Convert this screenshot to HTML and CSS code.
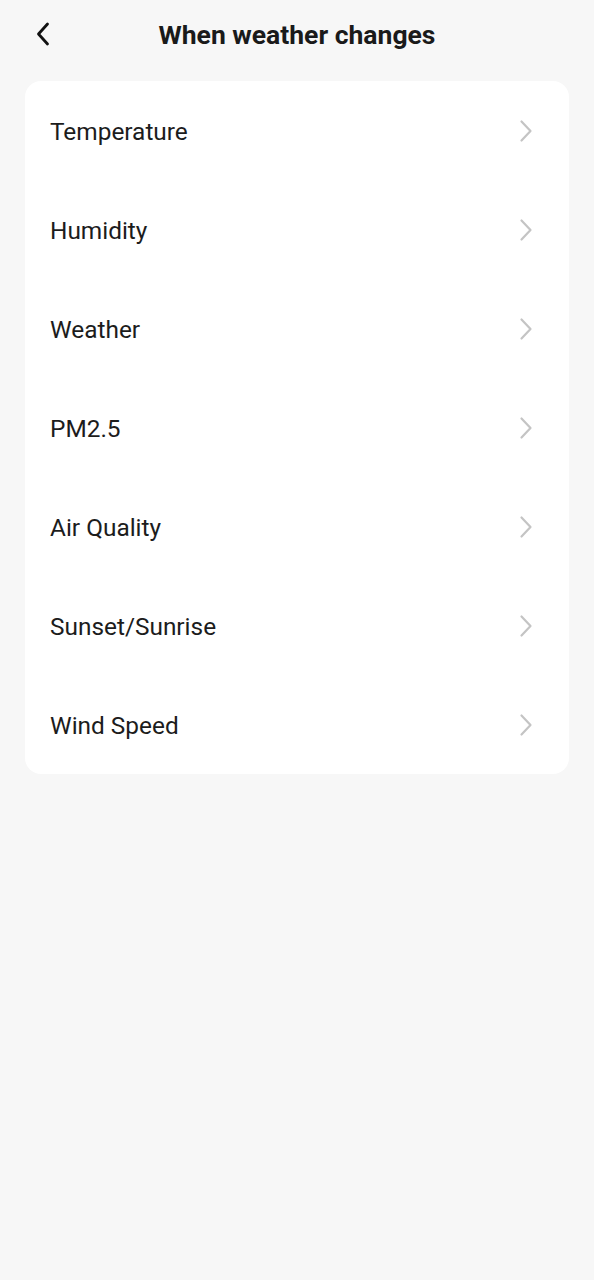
FILE: index.html
```html
<!DOCTYPE html>
<html>
<head>
<meta charset="utf-8">
<link rel="stylesheet" href="styles.css">
</head>
<body>
<header class="topbar">
  <button class="back" aria-label="Back">
    <svg width="18" height="26" viewBox="0 0 18 26"><path d="M13.5 3 L4.5 13 L13.5 23" fill="none" stroke="#111" stroke-width="2.8" stroke-linecap="round" stroke-linejoin="round"/></svg>
  </button>
  <h1 class="title">When weather changes</h1>
</header>
<main class="card">
  <div class="row"><span class="label">Temperature</span><svg class="chev" width="16" height="24" viewBox="0 0 16 24"><path d="M3.5 2.5 L12.5 12 L3.5 21.5" fill="none" stroke="#c4c4c4" stroke-width="2.2" stroke-linecap="round" stroke-linejoin="round"/></svg></div>
  <div class="row"><span class="label">Humidity</span><svg class="chev" width="16" height="24" viewBox="0 0 16 24"><path d="M3.5 2.5 L12.5 12 L3.5 21.5" fill="none" stroke="#c4c4c4" stroke-width="2.2" stroke-linecap="round" stroke-linejoin="round"/></svg></div>
  <div class="row"><span class="label">Weather</span><svg class="chev" width="16" height="24" viewBox="0 0 16 24"><path d="M3.5 2.5 L12.5 12 L3.5 21.5" fill="none" stroke="#c4c4c4" stroke-width="2.2" stroke-linecap="round" stroke-linejoin="round"/></svg></div>
  <div class="row"><span class="label">PM2.5</span><svg class="chev" width="16" height="24" viewBox="0 0 16 24"><path d="M3.5 2.5 L12.5 12 L3.5 21.5" fill="none" stroke="#c4c4c4" stroke-width="2.2" stroke-linecap="round" stroke-linejoin="round"/></svg></div>
  <div class="row"><span class="label">Air Quality</span><svg class="chev" width="16" height="24" viewBox="0 0 16 24"><path d="M3.5 2.5 L12.5 12 L3.5 21.5" fill="none" stroke="#c4c4c4" stroke-width="2.2" stroke-linecap="round" stroke-linejoin="round"/></svg></div>
  <div class="row"><span class="label">Sunset/Sunrise</span><svg class="chev" width="16" height="24" viewBox="0 0 16 24"><path d="M3.5 2.5 L12.5 12 L3.5 21.5" fill="none" stroke="#c4c4c4" stroke-width="2.2" stroke-linecap="round" stroke-linejoin="round"/></svg></div>
  <div class="row"><span class="label">Wind Speed</span><svg class="chev" width="16" height="24" viewBox="0 0 16 24"><path d="M3.5 2.5 L12.5 12 L3.5 21.5" fill="none" stroke="#c4c4c4" stroke-width="2.2" stroke-linecap="round" stroke-linejoin="round"/></svg></div>
</main>
</body>
</html>
```
FILE: styles.css
```css
* { box-sizing: border-box; }
html, body { margin: 0; padding: 0; }
body {
  background: #f7f7f7;
  font-family: Roboto, "Liberation Sans", sans-serif;
  color: #1a1a1a;
  width: 594px;
  min-height: 1280px;
}
.topbar {
  position: relative;
  height: 70px;
  display: flex;
  align-items: center;
  justify-content: center;
}
.back {
  position: absolute;
  left: 34px;
  top: 21px;
  width: 18px;
  height: 26px;
  padding: 0;
  border: 0;
  background: none;
  display: flex;
}
.title {
  margin: 0;
  font-size: 26.5px;
  font-weight: 700;
  color: #1a1a1a;
  letter-spacing: 0;
  line-height: 1;
}
.card {
  margin: 11px 25px 0 25px;
  background: #fff;
  border-radius: 16px;
  display: flex;
  flex-direction: column;
}
.row {
  height: 99px;
  display: flex;
  align-items: center;
  justify-content: space-between;
  padding: 0 35px 0 25px;
}
.label {
  font-size: 24.4px;
  color: #1c1c1c;
  line-height: 1;
  padding-top: 3px;
}
.chev { display: block; }
```
